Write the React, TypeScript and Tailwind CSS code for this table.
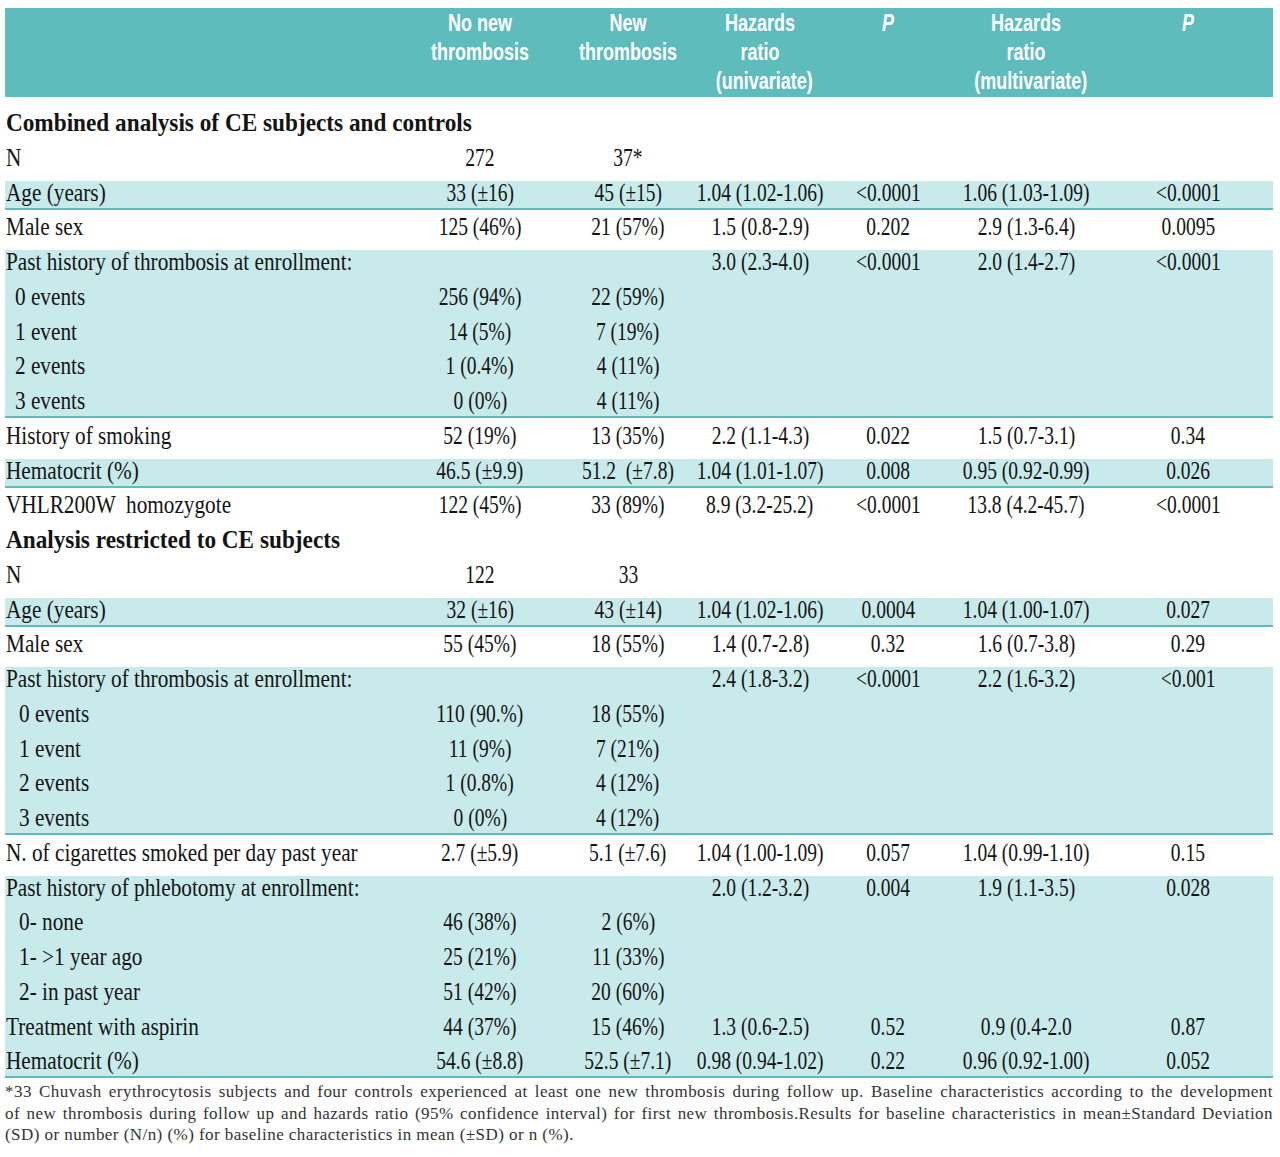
import React from "react";

type Row = {
  label: string;
  title?: boolean;
  indent?: string;
  cells?: string[];
};

type Group = {
  shaded: boolean;
  rows: Row[];
};

const groups: Group[] = [
  {
    shaded: false,
    rows: [
      { label: "Combined analysis of CE subjects and controls", title: true },
      { label: "N", cells: ["272", "37*"] },
    ],
  },
  {
    shaded: true,
    rows: [
      {
        label: "Age (years)",
        cells: ["33 (±16)", "45 (±15)", "1.04 (1.02-1.06)", "<0.0001", "1.06 (1.03-1.09)", "<0.0001"],
      },
    ],
  },
  {
    shaded: false,
    rows: [
      {
        label: "Male sex",
        cells: ["125 (46%)", "21 (57%)", "1.5 (0.8-2.9)", "0.202", "2.9 (1.3-6.4)", "0.0095"],
      },
    ],
  },
  {
    shaded: true,
    rows: [
      {
        label: "Past history of thrombosis at enrollment:",
        cells: ["", "", "3.0 (2.3-4.0)", "<0.0001", "2.0 (1.4-2.7)", "<0.0001"],
      },
      { label: "0 events", indent: "pl-[10px]", cells: ["256 (94%)", "22 (59%)"] },
      { label: "1 event", indent: "pl-[10px]", cells: ["14 (5%)", "7 (19%)"] },
      { label: "2 events", indent: "pl-[10px]", cells: ["1 (0.4%)", "4 (11%)"] },
      { label: "3 events", indent: "pl-[10px]", cells: ["0 (0%)", "4 (11%)"] },
    ],
  },
  {
    shaded: false,
    rows: [
      {
        label: "History of smoking",
        cells: ["52 (19%)", "13 (35%)", "2.2 (1.1-4.3)", "0.022", "1.5 (0.7-3.1)", "0.34"],
      },
    ],
  },
  {
    shaded: true,
    rows: [
      {
        label: "Hematocrit (%)",
        cells: ["46.5 (±9.9)", "51.2  (±7.8)", "1.04 (1.01-1.07)", "0.008", "0.95 (0.92-0.99)", "0.026"],
      },
    ],
  },
  {
    shaded: false,
    rows: [
      {
        label: "VHLR200W  homozygote",
        cells: ["122 (45%)", "33 (89%)", "8.9 (3.2-25.2)", "<0.0001", "13.8 (4.2-45.7)", "<0.0001"],
      },
      { label: "Analysis restricted to CE subjects", title: true },
      { label: "N", cells: ["122", "33"] },
    ],
  },
  {
    shaded: true,
    rows: [
      {
        label: "Age (years)",
        cells: ["32 (±16)", "43 (±14)", "1.04 (1.02-1.06)", "0.0004", "1.04 (1.00-1.07)", "0.027"],
      },
    ],
  },
  {
    shaded: false,
    rows: [
      {
        label: "Male sex",
        cells: ["55 (45%)", "18 (55%)", "1.4 (0.7-2.8)", "0.32", "1.6 (0.7-3.8)", "0.29"],
      },
    ],
  },
  {
    shaded: true,
    rows: [
      {
        label: "Past history of thrombosis at enrollment:",
        cells: ["", "", "2.4 (1.8-3.2)", "<0.0001", "2.2 (1.6-3.2)", "<0.001"],
      },
      { label: "0 events", indent: "pl-[14px]", cells: ["110 (90.%)", "18 (55%)"] },
      { label: "1 event", indent: "pl-[14px]", cells: ["11 (9%)", "7 (21%)"] },
      { label: "2 events", indent: "pl-[14px]", cells: ["1 (0.8%)", "4 (12%)"] },
      { label: "3 events", indent: "pl-[14px]", cells: ["0 (0%)", "4 (12%)"] },
    ],
  },
  {
    shaded: false,
    rows: [
      {
        label: "N. of cigarettes smoked per day past year",
        cells: ["2.7 (±5.9)", "5.1 (±7.6)", "1.04 (1.00-1.09)", "0.057", "1.04 (0.99-1.10)", "0.15"],
      },
    ],
  },
  {
    shaded: true,
    rows: [
      {
        label: "Past history of phlebotomy at enrollment:",
        cells: ["", "", "2.0 (1.2-3.2)", "0.004", "1.9 (1.1-3.5)", "0.028"],
      },
      { label: "0- none", indent: "pl-[14px]", cells: ["46 (38%)", "2 (6%)"] },
      { label: "1- >1 year ago", indent: "pl-[14px]", cells: ["25 (21%)", "11 (33%)"] },
      { label: "2- in past year", indent: "pl-[14px]", cells: ["51 (42%)", "20 (60%)"] },
      {
        label: "Treatment with aspirin",
        cells: ["44 (37%)", "15 (46%)", "1.3 (0.6-2.5)", "0.52", "0.9 (0.4-2.0", "0.87"],
      },
      {
        label: "Hematocrit (%)",
        cells: ["54.6 (±8.8)", "52.5 (±7.1)", "0.98 (0.94-1.02)", "0.22", "0.96 (0.92-1.00)", "0.052"],
      },
    ],
  },
];

// widths of the six value columns, label column is w-[400px]
const colClasses = ["w-[150px]", "w-[146px]", "w-[118px]", "w-[138px]", "w-[138px]", "w-[178px] pl-[8px]"];

const headers: { lines: string[]; italic?: boolean }[] = [
  { lines: ["No new", "thrombosis"] },
  { lines: ["New", "thrombosis"] },
  { lines: ["Hazards", "ratio", "(univariate)"] },
  { lines: ["P"], italic: true },
  { lines: ["Hazards", "ratio", "(multivariate)"] },
  { lines: ["P"], italic: true },
];

function TableRow({ row, last }: { row: Row; last: boolean }) {
  const height = last ? "h-[27px]" : "h-[34.75px]";

  if (row.title) {
    return (
      <div className={`flex items-start ${height}`}>
        <span className="inline-block origin-left scale-x-[0.93] whitespace-pre pl-[1px] text-[25px] font-bold leading-[24px]">
          {row.label}
        </span>
      </div>
    );
  }

  return (
    <div className={`flex items-start ${height}`}>
      <div className={`w-[400px] shrink-0 pl-[1px] ${row.indent ?? ""}`}>
        <span className="inline-block origin-left scale-x-[0.85] whitespace-pre text-[25px] leading-[24px]">
          {row.label}
        </span>
      </div>
      {colClasses.map((cls, i) => (
        <div key={i} className={`flex shrink-0 justify-center ${cls}`}>
          <span className="inline-block scale-x-[0.78] whitespace-pre text-[25px] leading-[24px]">
            {row.cells?.[i] ?? ""}
          </span>
        </div>
      ))}
    </div>
  );
}

function TableGroup({ group, isLast }: { group: Group; isLast: boolean }) {
  if (!group.shaded) {
    return (
      <div>
        {group.rows.map((row, i) => (
          <TableRow key={i} row={row} last={false} />
        ))}
      </div>
    );
  }
  return (
    <div className={`border-b-2 border-[#5fbcbc] bg-[#c8eaea] ${isLast ? "" : "mb-[5.75px]"}`}>
      {group.rows.map((row, i) => (
        <TableRow key={i} row={row} last={i === group.rows.length - 1} />
      ))}
    </div>
  );
}

export default function App() {
  return (
    <div className="min-h-[1157px] w-[1280px] bg-white pt-[8px]">
      <div className="ml-[5px] w-[1268px] font-['Liberation_Serif',serif] text-[#141414]">
        {/* Header */}
        <div className="flex h-[89px] bg-[#5fbcbc] font-['Liberation_Sans',Arial,sans-serif] text-white">
          <div className="w-[400px] shrink-0" />
          {headers.map((h, i) => (
            <div key={i} className={`shrink-0 text-center ${colClasses[i]}`}>
              {h.lines.map((line) => (
                <span
                  key={line}
                  className={`block scale-x-[0.75] whitespace-nowrap text-[24px] font-bold leading-[29px] ${
                    h.italic ? "italic" : ""
                  }`}
                >
                  {line}
                </span>
              ))}
            </div>
          ))}
        </div>

        {/* Body */}
        <div className="mt-[14px]">
          {groups.map((g, i) => (
            <TableGroup key={i} group={g} isLast={i === groups.length - 1} />
          ))}
        </div>

        {/* Footnote */}
        <div className="mt-[3px] whitespace-nowrap text-[17px] leading-[21.5px] tracking-[0.45px] text-[#333]">
          <div className="text-justify [text-align-last:justify]">
            *33 Chuvash erythrocytosis subjects and four controls experienced at least one new thrombosis during follow up. Baseline characteristics according to the development
          </div>
          <div className="text-justify [text-align-last:justify]">
            of new thrombosis during follow up and hazards ratio (95% confidence interval) for first new thrombosis.Results for baseline characteristics in mean±Standard Deviation
          </div>
          <div>(SD) or number (N/n) (%) for baseline characteristics in mean (±SD) or n (%).</div>
        </div>
      </div>
    </div>
  );
}
